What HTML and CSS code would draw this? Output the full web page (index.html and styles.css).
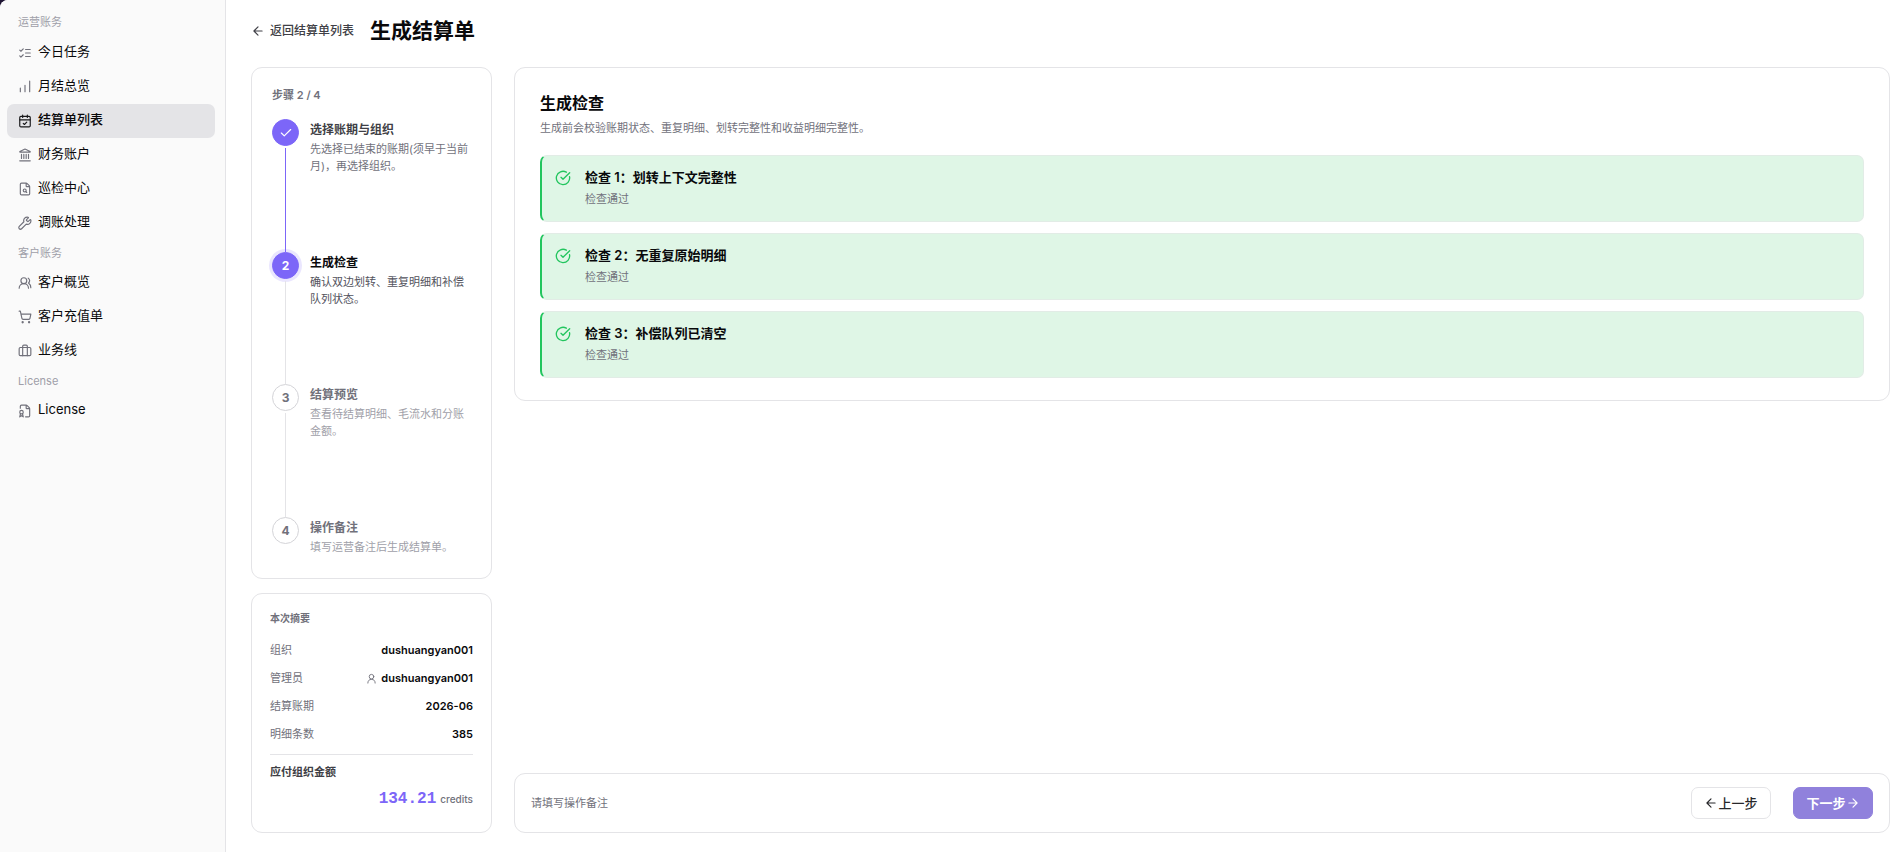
FILE: index.html
```html
<!DOCTYPE html>
<html lang="zh-CN">
<head>
<meta charset="utf-8">
<meta name="viewport" content="width=device-width, initial-scale=1">
<title>生成结算单</title>
<link rel="stylesheet" href="styles.css">
</head>
<body>
<div class="app">
  <nav class="sidebar" aria-label="主导航">
    <h2 class="nav-group">运营账务</h2>
    <a class="nav-item" href="#"><svg class="icon" viewBox="0 0 24 24"><path d="m3 17 2 2 4-4M3 7l2 2 4-4M13 6h8M13 12h8M13 18h8"/></svg>今日任务</a>
    <a class="nav-item" href="#"><svg class="icon" viewBox="0 0 24 24"><path d="M4 20v-6M12 20V9M20 20V2"/></svg>月结总览</a>
    <a class="nav-item active" aria-current="page" href="#"><svg class="icon" viewBox="0 0 24 24"><path d="M8 2v4M16 2v4M3 10h18M9 16l2 2 4-4"/><rect x="3" y="4" width="18" height="18" rx="2"/></svg>结算单列表</a>
    <a class="nav-item" href="#"><svg class="icon" viewBox="0 0 24 24"><path d="M10 18v-7M14 18v-7M18 18v-7M6 18v-7M3 22h18M11.1 2.2a2 2 0 0 1 1.8 0l7.9 3.9c.4.2.3.9-.3.9h-17c-.6 0-.7-.7-.3-.9z"/></svg>财务账户</a>
    <a class="nav-item" href="#"><svg class="icon" viewBox="0 0 24 24"><path d="M6 22a2 2 0 0 1-2-2V4a2 2 0 0 1 2-2h8a2.4 2.4 0 0 1 1.7.7l3.6 3.6A2.4 2.4 0 0 1 20 8v12a2 2 0 0 1-2 2zM14 2v5a1 1 0 0 0 1 1h5M13.3 16.3 15 18"/><circle cx="11.5" cy="14.5" r="2.5"/></svg>巡检中心</a>
    <a class="nav-item" href="#"><svg class="icon" viewBox="0 0 24 24"><path d="M14.7 6.3a1 1 0 0 0 0 1.4l1.6 1.6a1 1 0 0 0 1.4 0l3.1-3.1c.3-.3.9-.2 1 .2a6 6 0 0 1-7.7 7.5L6.2 21.800a1 1 0 0 1-4-4l7.900-7.900a6 6 0 0 1 7.500-7.700c.4.1.5.7.2 1z"/></svg>调账处理</a>
    <h2 class="nav-group">客户账务</h2>
    <a class="nav-item" href="#"><svg class="icon" viewBox="0 0 24 24"><path d="M18 21a8 8 0 0 0-16 0M22 20c0-3.400-2-6.500-4-8a5 5 0 0 0-.5-8.300"/><circle cx="10" cy="8" r="5"/></svg>客户概览</a>
    <a class="nav-item" href="#"><svg class="icon" viewBox="0 0 24 24"><circle cx="8" cy="21" r="1"/><circle cx="19" cy="21" r="1"/><path d="M2 2h2l2.700 12.400a2 2 0 0 0 2 1.600h9.800a2 2 0 0 0 2-1.600L22 7H5.100"/></svg>客户充值单</a>
    <a class="nav-item" href="#"><svg class="icon" viewBox="0 0 24 24"><path d="M16 20V4a2 2 0 0 0-2-2h-4a2 2 0 0 0-2 2v16"/><rect x="2" y="6" width="20" height="14" rx="2"/></svg>业务线</a>
    <h2 class="nav-group">License</h2>
    <a class="nav-item" href="#"><svg class="icon" viewBox="0 0 24 24"><path d="M13 22h5a2 2 0 0 0 2-2V8a2.400 2.400 0 0 0-.7-1.700l-3.600-3.600A2.400 2.400 0 0 0 14 2H6a2 2 0 0 0-2 2v3.300M14 2v5a1 1 0 0 0 1 1h5M7.700 16.500 9 22l-3-2-3 2 1.300-5.500"/><circle cx="6" cy="14" r="3"/></svg>License</a>
  </nav>

  <main class="main">
    <header class="page-head">
      <a class="back" href="#"><svg class="icon" viewBox="0 0 24 24"><path d="m12 19-7-7 7-7M19 12H5"/></svg>返回结算单列表</a>
      <h1>生成结算单</h1>
    </header>

    <div class="columns">
      <aside class="left">
        <section class="card steps-card">
          <h2 class="eyebrow">步骤 2 / 4</h2>
          <ol class="steps">
            <li class="step done">
              <div class="rail"><span class="dot"><svg class="icon" viewBox="0 0 24 24"><path d="M20 6 9 17l-5-5"/></svg></span></div>
              <div class="step-text"><h3>选择账期与组织</h3><p>先选择已结束的账期(须早于当前月)，再选择组织。</p></div>
            </li>
            <li class="step current" aria-current="step">
              <div class="rail"><span class="dot">2</span></div>
              <div class="step-text"><h3>生成检查</h3><p>确认双边划转、重复明细和补偿队列状态。</p></div>
            </li>
            <li class="step">
              <div class="rail"><span class="dot">3</span></div>
              <div class="step-text"><h3>结算预览</h3><p>查看待结算明细、毛流水和分账金额。</p></div>
            </li>
            <li class="step">
              <div class="rail"><span class="dot">4</span></div>
              <div class="step-text"><h3>操作备注</h3><p>填写运营备注后生成结算单。</p></div>
            </li>
          </ol>
        </section>

        <section class="card summary">
          <h2 class="eyebrow">本次摘要</h2>
          <dl class="facts">
            <div><dt>组织</dt><dd>dushuangyan001</dd></div>
            <div><dt>管理员</dt><dd><svg class="icon" viewBox="0 0 24 24"><path d="M20 22a8 8 0 0 0-16 0"/><circle cx="12" cy="8" r="5"/></svg>dushuangyan001</dd></div>
            <div><dt>结算账期</dt><dd>2026-06</dd></div>
            <div><dt>明细条数</dt><dd>385</dd></div>
          </dl>
          <div class="total">
            <h3>应付组织金额</h3>
            <p><strong>134.21</strong><span>credits</span></p>
          </div>
        </section>
      </aside>

      <div class="right">
        <section class="card checks">
          <h2>生成检查</h2>
          <p class="lead">生成前会校验账期状态、重复明细、划转完整性和收益明细完整性。</p>
          <ul class="check-list">
            <li><svg class="icon" viewBox="0 0 24 24"><path d="M21.800 10A10 10 0 1 1 17 3.300M9 11l3 3L22 4"/></svg><div><h3>检查 1：划转上下文完整性</h3><p>检查通过</p></div></li>
            <li><svg class="icon" viewBox="0 0 24 24"><path d="M21.800 10A10 10 0 1 1 17 3.300M9 11l3 3L22 4"/></svg><div><h3>检查 2：无重复原始明细</h3><p>检查通过</p></div></li>
            <li><svg class="icon" viewBox="0 0 24 24"><path d="M21.800 10A10 10 0 1 1 17 3.300M9 11l3 3L22 4"/></svg><div><h3>检查 3：补偿队列已清空</h3><p>检查通过</p></div></li>
          </ul>
        </section>

        <footer class="card actions">
          <p>请填写操作备注</p>
          <button class="btn" type="button"><svg class="icon" viewBox="0 0 24 24"><path d="m12 19-7-7 7-7M19 12H5"/></svg>上一步</button>
          <button class="btn primary" type="button">下一步<svg class="icon" viewBox="0 0 24 24"><path d="M5 12h14M12 5l7 7-7 7"/></svg></button>
        </footer>
      </div>
    </div>
  </main>
</div>
</body>
</html>
```
FILE: styles.css
```css
:root {
  --text: #09090b;
  --strong: #3f3f46;
  --muted: #71717b;
  --faint: #9f9fa9;
  --line: #e4e4e7;
  --accent: #7c66f8;
  --success: #22c55e;
}

* { box-sizing: border-box; }

html { background: #1e1433; }

body {
  margin: 0;
  color: var(--text);
  font: 400 11px/17px Inter, "Noto Sans CJK SC", sans-serif;
}

h1, h2, h3, p, ol, ul, dl, dd { margin: 0; padding: 0; }
h1, h2, h3, dd { font-weight: 600; }
ol, ul { list-style: none; }
a { color: inherit; text-decoration: none; }

.icon {
  width: 14px;
  height: 14px;
  flex: none;
  fill: none;
  stroke: currentColor;
  stroke-width: 2;
  stroke-linecap: round;
  stroke-linejoin: round;
}

.app {
  display: flex;
  min-height: 100vh;
  background: #fff;
  border-top-left-radius: 8px;
  overflow: hidden;
}

/* Sidebar */
.sidebar {
  flex: 0 0 226px;
  padding: 10px 10px 10px 7px;
  background: #fafafa;
  border-right: 1px solid var(--line);
}

.nav-group {
  padding-left: 11px;
  color: var(--faint);
  font-size: 11px;
  font-weight: 400;
  line-height: 26px;
}

.nav-group:first-child { margin-bottom: 2px; line-height: 24px; }

.nav-item {
  display: flex;
  align-items: center;
  gap: 6px;
  height: 34px;
  padding: 0 11px 4px;
  border-radius: 7px;
  font-size: 13px;
}

.nav-item .icon { margin-top: 4px; color: #71717b; }
.nav-item.active { background: #e4e4e7; font-weight: 500; }
.nav-item.active .icon { color: #18181b; }

/* Page */
.main {
  flex: 1;
  min-width: 0;
  display: flex;
  flex-direction: column;
  padding: 15px 12px 19px 25px;
}

.page-head {
  display: flex;
  align-items: center;
  gap: 16px;
  margin-bottom: 20px;
}

.page-head h1 { font-size: 21px; line-height: 32px; font-weight: 700; }

.back {
  display: flex;
  align-items: center;
  gap: 5px;
  padding-bottom: 2px;
  color: var(--strong);
  font-size: 12px;
  font-weight: 500;
}

.back .icon { margin-top: 2px; }

.columns { flex: 1; display: flex; gap: 22px; }
.left { flex: 0 0 241px; display: flex; flex-direction: column; gap: 14px; }
.right { flex: 1; min-width: 0; display: flex; flex-direction: column; justify-content: space-between; gap: 14px; }

.card {
  background: #fff;
  border: 1px solid var(--line);
  border-radius: 11px;
}

.eyebrow { color: var(--muted); font-size: 10px; font-weight: 600; }

/* Steps */
.steps-card {
  flex: 1;
  display: flex;
  flex-direction: column;
  padding: 19px 20px 22px;
}

.steps-card .eyebrow { font-size: 11px; }

.steps { flex: 1; display: flex; flex-direction: column; margin-top: 15px; }
.step { flex: 1; display: flex; gap: 11px; }
.step:last-child { flex: none; }

.rail { display: flex; flex-direction: column; align-items: center; }
.rail::after { content: ""; flex: 1; width: 1px; margin-top: 2px; background: var(--line); }
.step:last-child .rail::after { display: none; }

.dot {
  width: 27px;
  height: 27px;
  display: grid;
  place-items: center;
  border: 1px solid #d4d4d8;
  border-radius: 50%;
  color: var(--muted);
  font-size: 12px;
  line-height: 25px;
  font-weight: 700;
}

.done .dot, .current .dot { background: var(--accent); border-color: var(--accent); color: #fff; }
.current .dot { box-shadow: 0 0 0 3px rgba(124, 102, 248, 0.16); }
.done .rail::after { background: var(--accent); }

.step-text { flex: 1; padding-top: 1px; }
.step h3 { color: var(--muted); font-size: 12px; line-height: 19px; }
.step p { margin-top: 2px; color: var(--faint); }
.step.done h3 { color: var(--strong); }
.step.done p { color: var(--muted); }
.step.current h3 { color: var(--text); }
.step.current p { color: #52525c; }

/* Summary */
.summary { padding: 16px 18px 22px; }
.facts { display: grid; gap: 11px; margin-top: 15px; padding-bottom: 11px; border-bottom: 1px solid var(--line); }
.facts div { display: flex; justify-content: space-between; }
.facts dt { color: var(--muted); }
.facts dd { display: flex; align-items: center; gap: 4px; }
.facts .icon { width: 11px; height: 11px; color: var(--muted); }
.total { padding-top: 9px; }
.total h3 { color: var(--strong); font-size: 11px; }
.total p { display: flex; justify-content: flex-end; align-items: baseline; gap: 4px; margin-top: 8px; line-height: 21px; }
.total strong { color: var(--accent); font: 700 16px/21px "Liberation Mono", monospace; }
.total span { color: var(--muted); font-size: 10px; font-weight: 500; }

/* Checks */
.checks { padding: 24px 25px 22px; }
.checks h2 { font-size: 16px; line-height: 22px; }
.lead { margin-top: 6px; color: var(--muted); }
.check-list { display: grid; gap: 11px; margin-top: 18px; }

.check-list li {
  display: flex;
  gap: 14px;
  padding: 12px 13px 13px;
  background: #dff6e6;
  border: 1px solid #e2ece6;
  border-left: 2px solid var(--success);
  border-radius: 7px;
}

.check-list .icon { width: 16px; height: 16px; margin-top: 2px; color: var(--success); }
.check-list h3 { font-size: 13px; line-height: 18px; }
.check-list p { margin-top: 5px; color: var(--muted); }

/* Actions */
.actions {
  display: flex;
  align-items: center;
  gap: 22px;
  padding: 13px 16px;
}

.actions p { flex: 1; color: var(--muted); }

.btn {
  display: flex;
  align-items: center;
  justify-content: center;
  width: 80px;
  height: 32px;
  padding: 0;
  border: 1px solid var(--line);
  border-radius: 7px;
  background: #fff;
  color: #27272a;
  font: inherit;
  font-size: 13px;
  font-weight: 500;
}

.btn.primary { background: #9081dc; border-color: #9081dc; color: #fff; font-weight: 600; }
```
